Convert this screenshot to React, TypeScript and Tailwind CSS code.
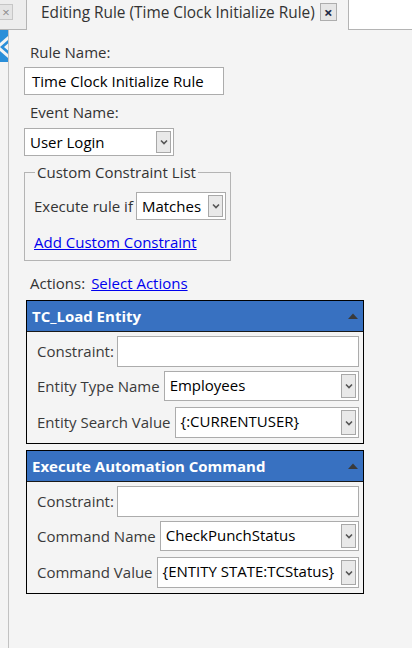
import React from 'react'

const FONT = { fontFamily: '"Open Sans", "Noto Sans", sans-serif' }

function Chevron() {
  return (
    <svg width="8" height="6" viewBox="0 0 8 6" className="block">
      <path d="M1 1.5 L4 4.5 L7 1.5" fill="none" stroke="#555" strokeWidth="1.6" />
    </svg>
  )
}

function Select({ value, className }: { value: string; className: string }) {
  return (
    <div className={`flex items-stretch border border-[#acacac] bg-white p-[2px] ${className}`}>
      <span className="flex-1 truncate whitespace-nowrap pl-[3px] text-[15px] leading-[22px] text-black">{value}</span>
      <span className="flex w-[15px] shrink-0 items-center justify-center border border-[#a8a8a8] bg-[#e9e9e9]">
        <Chevron />
      </span>
    </div>
  )
}

function Input({ value, className }: { value?: string; className: string }) {
  return (
    <div className={`whitespace-nowrap border border-[#acacac] bg-white px-[7px] text-[15px] text-black ${className}`}>
      {value}
    </div>
  )
}

function ActionPanel({
  title,
  rows,
}: {
  title: string
  rows: { label: string; value: string }[]
}) {
  return (
    <div className="ml-[17px] w-[338px] border-[1.5px] border-black bg-[#f4f4f4]">
      <div className="flex h-[31px] items-center justify-between border-b border-[#1a1a1a] bg-[#3871c1] pl-[5px] pr-[5px]">
        <span className="text-[15px] font-bold text-white">{title}</span>
        <svg width="10" height="6" viewBox="0 0 10 6">
          <path d="M0 6 L5 0.5 L10 6 Z" fill="#3a3a3a" />
        </svg>
      </div>
      <div className="flex flex-col px-[4px] pb-[5px] pt-[4px]">
        <div className="flex items-center">
          <span className="whitespace-nowrap pl-[6px] pr-[3px] text-[15px] text-[#3a3a3a]">Constraint:</span>
          <Input className="h-[31px] flex-1" />
        </div>
        <div className="mt-[4px] flex items-center">
          <span className="whitespace-nowrap pl-[6px] pr-[4px] text-[15px] text-[#3a3a3a]">{rows[0].label}</span>
          <Select value={rows[0].value} className="h-[30px] flex-1" />
        </div>
        <div className="mt-[6px] flex items-center">
          <span className="whitespace-nowrap pl-[6px] pr-[4px] text-[15px] text-[#3a3a3a]">{rows[1].label}</span>
          <Select value={rows[1].value} className="h-[31px] flex-1" />
        </div>
      </div>
    </div>
  )
}

export default function App() {
  return (
    <div className="relative h-[648px] w-[412px] overflow-hidden bg-[#f4f4f4]" style={FONT}>
      {/* tab strip */}
      <div className="flex h-[30px]">
        <div className="w-[27px] border-b border-r border-[#b4b4b4] bg-[#ededed] pt-[4px]">
          <div className="flex h-[16px] w-[13px] items-center justify-center border border-l-0 border-[#c6c6c6] bg-[#e4e4e4] text-[13px] leading-none text-[#8a8a8a]">
            ×
          </div>
        </div>
        <div className="flex w-[321px] items-start pl-[14px] pt-[1px]">
          <span className="whitespace-nowrap text-[15.4px] leading-[24px] text-[#333]">Editing Rule (Time Clock Initialize Rule)</span>
          <span className="ml-[5px] mt-[2px] flex h-[18px] w-[17px] shrink-0 items-center justify-center border border-[#adadad] bg-[#e6e6e6] text-[15px] font-bold leading-none text-[#1f2a44]">
            ×
          </span>
        </div>
        <div className="flex-1 border-b border-l border-[#b4b4b4] bg-white" />
      </div>

      <div className="flex">
        {/* left rail */}
        <div className="flex h-[618px] w-[9px] flex-col border-r border-[#c2c2c2]">
          <svg width="8" height="32" viewBox="0 0 8 32" className="block">
            <path d="M0 0 H8 V6 L0 13 Z" fill="#2b8fd9" />
            <path d="M0 17 L8 10 V13.5 L4 17 L8 20.5 V24 Z" fill="#2b8fd9" />
            <path d="M0 21 L8 28 V32 H0 Z" fill="#2b8fd9" />
          </svg>
        </div>

        {/* content */}
        <div className="flex flex-1 flex-col pl-[15px]">
          <span className="mt-[12px] pl-[6px] text-[15px] leading-[20px] text-[#333]">Rule Name:</span>
          <Input value="Time Clock Initialize Rule" className="mt-[5px] h-[28px] w-[200px] leading-[26px]" />

          <span className="mt-[7px] pl-[6px] text-[15px] leading-[20px] text-[#333]">Event Name:</span>
          <Select value="User Login" className="mt-[6px] h-[28px] w-[150px]" />

          <fieldset className="mt-[6px] w-[207px] border border-[#b4b4b4] pb-[8px] pl-[9px] pr-[4px]">
            <legend className="ml-[1px] px-[2px] text-[15px] leading-[20px] text-[#333]">Custom Constraint List</legend>
            <div className="mt-[10px] flex items-center">
              <span className="whitespace-nowrap text-[15px] text-[#333]">Execute rule if</span>
              <Select value="Matches" className="ml-[3px] h-[28px] flex-1" />
            </div>
            <a href="#" className="mt-[12px] block text-[15px] leading-[20px] text-[#0000ee] underline">
              Add Custom Constraint
            </a>
          </fieldset>

          <div className="mt-[12px] flex pl-[6px] text-[15px] leading-[20px]">
            <span className="text-[#333]">Actions:</span>
            <a href="#" className="ml-[6px] text-[#0000ee] underline">Select Actions</a>
          </div>

          <div className="-ml-[15px] mt-[7px] flex flex-col">
            <ActionPanel
              title="TC_Load Entity"
              rows={[
                { label: 'Entity Type Name', value: 'Employees' },
                { label: 'Entity Search Value', value: '{:CURRENTUSER}' },
              ]}
            />
            <div className="h-[6px]" />
            <ActionPanel
              title="Execute Automation Command"
              rows={[
                { label: 'Command Name', value: 'CheckPunchStatus' },
                { label: 'Command Value', value: '{ENTITY STATE:TCStatus}' },
              ]}
            />
          </div>
        </div>
      </div>
    </div>
  )
}
